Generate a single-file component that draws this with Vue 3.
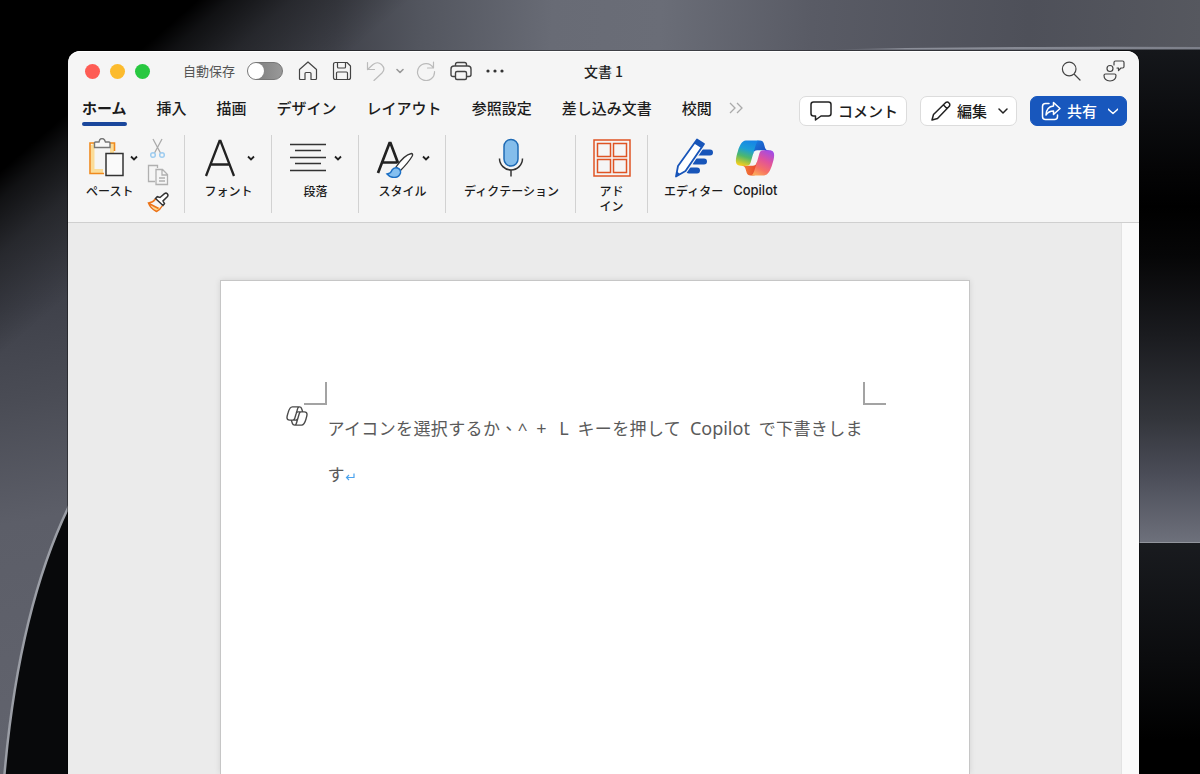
<script setup>
import { ref } from 'vue'

const autosave = ref(false)
const activeTab = ref('ホーム')
const tabs = ['ホーム', '挿入', '描画', 'デザイン', 'レイアウト', '参照設定', '差し込み文書', '校閲']
</script>

<template>
  <div class="desktop">
    <svg class="wallpaper" viewBox="0 0 1200 774" preserveAspectRatio="none" aria-hidden="true">
      <defs>
        <linearGradient id="wTop" gradientUnits="userSpaceOnUse" x1="120" y1="0" x2="1200" y2="60">
          <stop offset="0" stop-color="#303238" />
          <stop offset=".2" stop-color="#40424a" />
          <stop offset=".28" stop-color="#53565f" />
          <stop offset=".4" stop-color="#686b75" />
          <stop offset=".5" stop-color="#6a6d77" />
          <stop offset=".64" stop-color="#595b65" />
          <stop offset=".84" stop-color="#4e5059" />
          <stop offset="1" stop-color="#56585f" />
        </linearGradient>
        <linearGradient id="wLeft" gradientUnits="userSpaceOnUse" x1="0" y1="120" x2="120" y2="774">
          <stop offset="0" stop-color="#34363b" />
          <stop offset=".28" stop-color="#3f414a" />
          <stop offset=".42" stop-color="#4a4c55" />
          <stop offset=".6" stop-color="#5c5e68" />
          <stop offset="1" stop-color="#62646e" />
        </linearGradient>
        <linearGradient id="wShade" gradientUnits="userSpaceOnUse" x1="85" y1="98" x2="176" y2="203">
          <stop offset="0" stop-color="#000" />
          <stop offset=".15" stop-color="#000" stop-opacity=".7" />
          <stop offset=".45" stop-color="#000" stop-opacity=".35" />
          <stop offset="1" stop-color="#000" stop-opacity="0" />
        </linearGradient>
        <linearGradient id="wRight" x1="0" y1="0" x2="0" y2="1">
          <stop offset="0" stop-color="#15171b" />
          <stop offset=".25" stop-color="#040405" />
          <stop offset=".32" stop-color="#000" />
          <stop offset=".42" stop-color="#060607" />
          <stop offset=".58" stop-color="#1a1b1f" />
          <stop offset=".75" stop-color="#33353b" />
          <stop offset=".86" stop-color="#4a4c57" />
          <stop offset="1" stop-color="#6d707b" />
        </linearGradient>
        <linearGradient id="wFoot" x1="0" y1="0" x2="0" y2="1">
          <stop offset="0" stop-color="#191b1f" />
          <stop offset=".5" stop-color="#0b0c0e" />
          <stop offset=".85" stop-color="#000" />
        </linearGradient>
        <linearGradient id="wEdge" gradientUnits="userSpaceOnUse" x1="810" y1="0" x2="1200" y2="0">
          <stop offset="0" stop-color="#8c8f99" stop-opacity="0" />
          <stop offset=".25" stop-color="#8c8f99" />
          <stop offset="1" stop-color="#7d808a" />
        </linearGradient>
      </defs>
      <rect width="1200" height="774" fill="#000" />
      <rect y="50" width="140" height="724" fill="url(#wLeft)" />
      <rect width="1200" height="60" fill="url(#wTop)" />
      <rect width="600" height="400" fill="url(#wShade)" />
      <path d="M68 508Q18 610 4 774H140V508Z" fill="#08090b" />
      <path d="M70 504Q18 610 4 780" fill="none" stroke="#9b9ea6" stroke-width="2.5" />
      <rect x="1100" y="49" width="100" height="493" fill="url(#wRight)" />
      <rect x="1100" y="543" width="100" height="231" fill="url(#wFoot)" />
      <rect x="1100" y="542" width="100" height="1" fill="#92959d" />
      <path d="M810 50Q960 46 1200 47V49.500H810Z" fill="url(#wEdge)" />
    </svg>

    <main class="window">
      <header class="titlebar">
        <div class="quick">
          <div class="lights">
            <button class="light red" aria-label="閉じる"></button>
            <button class="light yellow" aria-label="しまう"></button>
            <button class="light green" aria-label="拡大"></button>
          </div>
          <label class="autosave">自動保存<input v-model="autosave" type="checkbox" class="toggle" /></label>
          <button class="tool" aria-label="ホーム画面">
            <svg width="20" height="20" viewBox="0 0 20 20"><path d="M1.500 8.500 10 1l8.500 7.500V17.500q0 1-1 1H13V12.500q0-1-1-1H8q-1 0-1 1V18.500H2.500q-1 0-1-1Z" /></svg>
          </button>
          <button class="tool" aria-label="保存">
            <svg width="20" height="20" viewBox="0 0 20 20"><path d="M1.500 3.500q0-2 2-2H15l3.500 3.500V16.500q0 2-2 2h-13q-2 0-2-2ZM5.500 1.500V6q0 1 1 1h6q1 0 1-1V1.500M4.500 18.500V12q0-1 1-1h9q1 0 1 1v6.500" /></svg>
          </button>
          <div class="undo">
            <button class="tool dim" aria-label="元に戻す">
              <svg width="20" height="20" viewBox="0 0 20 20"><path d="M1.500 1.500V8.500H8.500M1.500 8.500 7 3.500Q11.500 0 15.500 3.500q4.500 4.500.5 8.500L8 19.500" /></svg>
            </button>
            <button class="tool grey" aria-label="元に戻す履歴">
              <svg width="8" height="8" viewBox="0 0 8 8"><path d="m1 2.500 3 3 3-3" stroke-width="1.600" /></svg>
            </button>
          </div>
          <button class="tool dim redo" aria-label="繰り返し">
            <svg width="20" height="20" viewBox="0 0 20 20"><path d="M17.500 1v6h-6M17.200 6.500A8.500 8.500 0 1 0 18.500 10.500" /></svg>
          </button>
          <button class="tool" aria-label="印刷">
            <svg width="22" height="20" viewBox="0 0 22 20"><path d="M5 15.500H3q-2 0-2-2V8q0-3 3-3h14q3 0 3 3v5.500q0 2-2 2h-2M5.500 5V3.500q0-2 2-2h7q2 0 2 2V5M7 10.500h8q1.500 0 1.500 1.500v5q0 1.500-1.500 1.500H7Q5.500 18.500 5.500 17v-5q0-1.500 1.500-1.500Z" stroke-width="1.400" /></svg>
          </button>
          <button class="tool" aria-label="その他">
            <svg width="18" height="6" viewBox="1 0 18 6"><g class="dots"><circle cx="3" cy="3" r="1.600" /><circle cx="10" cy="3" r="1.600" /><circle cx="17" cy="3" r="1.600" /></g></svg>
          </button>
        </div>
        <h1 class="title">文書 1</h1>
        <div class="title-end">
          <button class="tool" aria-label="検索">
            <svg width="20" height="20" viewBox="0 0 20 20"><path d="M15 8A6.800 6.800 0 1 1 1.400 8 6.800 6.800 0 0 1 15 8ZM13 13 19 19" /></svg>
          </button>
          <button class="tool" aria-label="フィードバック">
            <svg width="22" height="22" viewBox="0 0 22 22"><path d="M10 8.500a3 3 0 1 1-6 0 3 3 0 0 1 6 0ZM2.500 14h9q1.500 0 1.500 1.500 0 5-6 5.500-6-.500-6-5.500Q1 14 2.500 14ZM12.500 1h7Q21 1 21 2.500v4Q21 8 19.500 8H18l-2.500 2.500V8.200L14 8M11 5V2.500Q11 1 12.500 1" /></svg>
          </button>
        </div>
      </header>

      <div class="tabrow">
        <nav class="tabs">
          <button v-for="t in tabs" :key="t" class="tab" :class="{ active: t === activeTab }" @click="activeTab = t">{{ t }}</button>
          <button class="more" aria-label="その他のタブ">
            <svg width="16" height="12" viewBox="0 0 16 12"><path d="m2 1 5 5-5 5M9 1l5 5-5 5" /></svg>
          </button>
        </nav>
        <div class="actions">
          <button class="action">
            <svg width="22" height="20" viewBox="0 0 22 20"><path d="M3.500 1h15Q21 1 21 3.500v9q0 2.500-2.500 2.500H11l-5.500 4V15h-2Q1 15 1 12.500v-9Q1 1 3.500 1Z" /></svg>
            コメント
          </button>
          <button class="action">
            <svg width="20" height="20" viewBox="0 0 20 20"><path d="m1 19 1.500-5.500L14.500 1.700q2-1.400 3.500.3 1.500 1.500.3 3.300L6.500 17.500ZM12.500 4l3.500 3.500" /></svg>
            編集
            <svg class="chev" width="10" height="8" viewBox="0 0 10 8"><path d="m1 2 4 4 4-4" /></svg>
          </button>
          <button class="action primary">
            <svg width="20" height="20" viewBox="0 0 20 20"><path d="M8 2.500H4.500Q1.500 2.500 1.500 5.500v10q0 3 3 3h9q3 0 3-3V14M12.500 1.500l6.500 6-6.500 6V10q-5 0-7.500 4 .5-8.500 7.500-9Z" /></svg>
            共有
            <svg class="chev" width="10" height="8" viewBox="0 0 10 8"><path d="m0 2 5 4.500 5-4.500" /></svg>
          </button>
        </div>
      </div>

      <section class="ribbon" aria-label="リボン">
        <div class="group clip">
          <button class="item paste">
            <span class="icons">
              <svg width="37" height="40" viewBox="0 0 37 40">
                <path d="M4.500 7v26H15M4.500 7H8" fill="none" stroke="#fbdc98" stroke-width="4" />
                <path d="M19 7h5v8" fill="none" stroke="#fbdc98" stroke-width="4" />
                <path d="M8 5H2v30.500h14M19 5h7.500v8" fill="none" stroke="#f08a1d" stroke-width="1.600" />
                <path d="M6.500 9.500V5q0-1 1-1H11q.500-3.500 3-3.500T17.500 4H21q1 0 1 1v4.500Z" fill="#f8f8f8" stroke="#777" stroke-width="1.400" />
                <rect x="18" y="15.500" width="17" height="22" fill="#fafafa" stroke="#333" stroke-width="1.500" />
              </svg>
              <svg class="drop" width="8" height="8" viewBox="0 0 8 8"><path d="m1 2.500 3 3 3-3" /></svg>
            </span>
            <span class="label">ペースト</span>
          </button>
          <div class="stack">
            <button aria-label="切り取り">
              <svg width="22" height="22" viewBox="0 0 22 22" fill="none"><path d="m6 2 7.500 14M15 2 7.500 16" stroke="#aaa" stroke-width="1.300" /><circle cx="6" cy="18" r="2.300" stroke="#9fcdf0" stroke-width="1.500" /><circle cx="15" cy="18" r="2.300" stroke="#9fcdf0" stroke-width="1.500" /></svg>
            </button>
            <button aria-label="コピー">
              <svg width="22" height="22" viewBox="0 0 22 22" fill="none" stroke="#b0b0b0" stroke-width="1.300"><path d="M8 17.500H1.500V1.500h9V4M9 5.500h6.500l5 5v10H9ZM15 5.500V11h5.500M12 14h6M12 17h6" /></svg>
            </button>
            <button aria-label="書式のコピー">
              <svg width="22" height="22" viewBox="0 0 22 22" fill="none" stroke-width="1.500"><path d="m4 14 10 3-4.500 4Z" fill="#fbd98b" /><path d="M8.500 8Q6 11.500 1.500 12q2 5.500 8 8.500 3.500-1.500 6-6M2 12.500l9.500 5" stroke="#ec7419" /><path d="m8.500 7.500 7.500 7 1.500-1.800-1.500-2.700 4.500-4.500q1-1.500-.2-2.700t-2.800-.2L13 6.500 10.300 5.700Z" fill="#fff" stroke="#333" /></svg>
            </button>
          </div>
        </div>
        <div class="group">
          <button class="item">
            <span class="icons">
              <svg width="36" height="40" viewBox="0 0 36 40"><path d="M3 38 16.500 3h1L31 38M7.500 26.500h19" fill="none" stroke="#222" stroke-width="2.300" /></svg>
              <svg class="drop" width="8" height="8" viewBox="0 0 8 8"><path d="m1 2.500 3 3 3-3" /></svg>
            </span>
            <span class="label">フォント</span>
          </button>
        </div>
        <div class="group">
          <button class="item">
            <span class="icons">
              <svg width="36" height="40" viewBox="0 0 36 40"><path d="M0 6.500h36M5 12.500h26M0 19.500h36M5 25.500h26M0 32.500h36" fill="none" stroke="#333" stroke-width="1.500" /></svg>
              <svg class="drop" width="8" height="8" viewBox="0 0 8 8"><path d="m1 2.500 3 3 3-3" /></svg>
            </span>
            <span class="label">段落</span>
          </button>
        </div>
        <div class="group">
          <button class="item">
            <span class="icons">
              <svg width="38" height="40" viewBox="0 0 38 40">
                <path d="M2 35 13.500 5h1L22 25M6.500 24.500h15" fill="none" stroke="#222" stroke-width="2.700" />
                <path d="M20 29Q28 17 35.500 15.500q2 .5.500 3Q32 25 24 33Z" fill="#fff" stroke="#333" stroke-width="1.300" />
                <path d="M11 36q4-.500 5-4 2-3 5.500-2t3 5Q23 39.500 18 39.500q-4 0-7-3.500Z" fill="#84bff0" stroke="#1c6fc4" stroke-width="1.400" />
              </svg>
              <svg class="drop" width="8" height="8" viewBox="0 0 8 8"><path d="m1 2.500 3 3 3-3" /></svg>
            </span>
            <span class="label">スタイル</span>
          </button>
        </div>
        <div class="group dictation">
          <button class="item">
            <span class="icons">
              <svg width="26" height="40" viewBox="0 0 26 40"><rect x="6" y="1.500" width="14" height="26.500" rx="7" fill="#84bdeb" stroke="#1f6bb5" stroke-width="1.500" /><path d="M1.500 20.500a11.500 11.500 0 0 0 23 0M13 32v6.500" fill="none" stroke="#333" stroke-width="1.500" /></svg>
            </span>
            <span class="label">ディクテーション</span>
          </button>
        </div>
        <div class="group addin">
          <button class="item">
            <span class="icons">
              <svg width="38" height="40" viewBox="0 0 38 40" fill="none" stroke="#df5424" stroke-width="1.500"><rect x="1" y="2" width="36" height="36" /><rect x="4.500" y="5.500" width="13" height="13" /><rect x="20.500" y="5.500" width="13" height="13" /><rect x="4.500" y="21.500" width="13" height="13" /><rect x="20.500" y="21.500" width="13" height="13" /></svg>
            </span>
            <span class="label">アド<br />イン</span>
          </button>
        </div>
        <div class="group last">
          <button class="item">
            <span class="icons">
              <svg width="40" height="40" viewBox="0 0 40 40"><path d="M24 14.500h12M20 23.500h10M15 32.500h8" fill="none" stroke="#1855b9" stroke-width="6" stroke-linecap="round" /><path d="m2 38.500 2-10.500L23 1.500l7 4.500L11.500 33Z" fill="#f5f5f5" stroke="#f5f5f5" stroke-width="4" /><path d="m2 38.500 2-10.500L23 1.500l7 4.500L11.500 33Z" fill="#fff" stroke="#1855b9" stroke-width="1.800" stroke-linejoin="round" /><path d="m2 38.500 1-5 3 2.500ZM23 1.500l7 4.500-2.800 4-7-4.500Z" fill="#1855b9" /></svg>
            </span>
            <span class="label">エディター</span>
          </button>
          <button class="item">
            <span class="icons">
              <svg width="40" height="38" viewBox="1 3 46 42">
                <defs>
                  <linearGradient id="cpA" x1="0" y1="0" x2="1" y2="1"><stop offset="0" stop-color="#1a7fe0" /><stop offset="1" stop-color="#1b3fb5" /></linearGradient>
                  <linearGradient id="cpB" x1="0" y1="0" x2="1" y2="0"><stop offset="0" stop-color="#f58a3c" /><stop offset="1" stop-color="#e8452d" /></linearGradient>
                  <linearGradient id="cpC" x1=".6" y1="0" x2=".3" y2="1"><stop offset="0" stop-color="#1785e6" /><stop offset=".35" stop-color="#1b9fd6" /><stop offset=".65" stop-color="#4fb86a" /><stop offset="1" stop-color="#f2cf1d" /></linearGradient>
                  <linearGradient id="cpD" x1=".8" y1="0" x2=".3" y2="1"><stop offset="0" stop-color="#a04be8" /><stop offset=".4" stop-color="#e0529c" /><stop offset=".75" stop-color="#f77263" /><stop offset="1" stop-color="#fba65a" /></linearGradient>
                </defs>
                <path fill="url(#cpA)" d="M34.142 7.325A4.630 4.630 0 0 0 29.700 4H28.350a4.630 4.630 0 0 0-4.554 3.794L21.480 20.407l.575-1.965a4.630 4.630 0 0 1 4.444-3.330h7.853l3.294 1.282 3.175-1.283h-.926a4.630 4.630 0 0 1-4.443-3.325l-1.310-4.461Z" />
                <path fill="url(#cpB)" d="M14.330 40.656A4.630 4.630 0 0 0 18.779 44h2.870a4.630 4.630 0 0 0 4.629-4.510l.312-12.163-.654 2.233a4.630 4.630 0 0 1-4.443 3.329h-7.919l-2.823-1.532-3.057 1.532h.912a4.630 4.630 0 0 1 4.447 3.344l1.279 4.423Z" />
                <path fill="url(#cpC)" d="M29.500 4H13.460c-4.583 0-7.332 6.057-9.165 12.113C2.123 23.290-.720 32.885 7.503 32.885h6.925a4.630 4.630 0 0 0 4.456-3.358q2.400-8.600 4.971-17.156c.843-2.843 1.544-5.284 2.621-6.805C27.080 4.715 28.086 4 29.500 4Z" />
                <path fill="url(#cpD)" d="M18.498 44h16.040c4.582 0 7.332-6.058 9.165-12.115 2.172-7.177 5.015-16.775-3.208-16.775h-6.926a4.630 4.630 0 0 0-4.455 3.358q-2.400 8.600-4.972 17.160c-.842 2.842-1.544 5.285-2.620 6.806-.604.852-1.610 1.566-3.024 1.566Z" />
              </svg>
            </span>
            <span class="label latin">Copilot</span>
          </button>
        </div>
      </section>

      <div class="workspace">
        <div class="canvas">
          <article class="page">
            <div class="corners"><span class="corner left"></span><span class="corner right"></span></div>
            <div class="body">
              <button class="draft" aria-label="Copilot で下書き">
                <svg width="22" height="22" viewBox="0 0 48 48" fill="none" stroke="#4a4a4a" stroke-width="3" stroke-linejoin="round"><path d="M29 4H14C9 4 6.500 10 4.500 17 2 25-.500 33 8 33h6.500q3.500 0 4.500-3.500l5-17Q26 4 29 4ZM19 44h15c5 0 7.500-6 9.500-13 2.500-8 5-16-3.500-16h-6.500q-3.500 0-4.500 3.500l-5 17Q22 44 19 44ZM29 4q4 0 5 3.500L36.500 15M19 44q-4 0-5-3.500L11.500 33M34 15h-7q-4 0-5 4M14 33h7q4 0 5-4" /></svg>
              </button>
              <p class="text">アイコンを選択するか<span lang="zh-TW" class="comma">、</span>^ <span class="word">+</span> <span class="word">L</span> キーを押して <span class="word">Copilot</span> で下書きします<svg class="ret" width="10" height="8" viewBox="0 0 10 8"><path d="M9 .500V4.500H1.500M4 2 1.500 4.500 4 7" /></svg></p>
            </div>
          </article>
        </div>
        <div class="scroller"></div>
      </div>
    </main>
  </div>
</template>

<style>
html, body { margin: 0; background: #000; }
</style>

<style scoped>
.desktop {
  position: relative;
  box-sizing: border-box;
  height: 100vh;
  padding: 51px 61px 0 68px;
  overflow: hidden;
  display: flex;
  font-family: "Noto Sans CJK JP", "Noto Sans", sans-serif;
  color: #1c1c1c;
}
.wallpaper { position: absolute; inset: 0; width: 100%; height: 100%; }
button { margin: 0; padding: 0; border: 0; background: none; font: inherit; color: inherit; cursor: pointer; }
svg { display: block; flex: none; }
.window {
  position: relative;
  flex: 1;
  min-width: 0;
  display: flex;
  flex-direction: column;
  background: #f5f5f5;
  border-radius: 12px 12px 0 0;
  overflow: hidden;
  box-shadow: 0 0 0 1px rgba(0, 0, 0, .4), inset 0 1px 0 #fff;
}
.titlebar { display: grid; grid-template-columns: 1fr auto 1fr; align-items: center; height: 40px; }
.quick { display: flex; align-items: center; gap: 14px; padding-left: 17px; }
.lights { display: flex; gap: 10px; margin-right: 19px; }
.light { width: 15px; height: 15px; border-radius: 50%; }
.red { background: #fe5c54; }
.yellow { background: #fcbb2d; }
.green { background: #28c840; }
.autosave { display: flex; align-items: center; gap: 12px; margin-right: 1px; font-size: 13px; line-height: 20px; color: #555; white-space: nowrap; }
.toggle { appearance: none; display: flex; box-sizing: border-box; width: 36px; height: 18px; margin: 0; border: 1px solid #777; border-radius: 9px; background: linear-gradient(90deg, #777, #999); cursor: pointer; }
.toggle::before { content: ""; width: 16px; height: 16px; border-radius: 50%; background: #fff; }
.toggle:checked { justify-content: flex-end; background: #1855b9; }
.tool { fill: none; stroke: #444; stroke-width: 1.200; stroke-linejoin: round; stroke-linecap: round; }
.dim { stroke: #bbb; }
.grey { stroke: #999; }
.dots { fill: #333; stroke: none; }
.undo { display: flex; align-items: center; gap: 10px; }
.redo { margin-left: -2px; }
.title { margin: 0; font-size: 14px; line-height: 20px; font-weight: 500; color: #222; }
.title-end { display: flex; justify-content: flex-end; align-items: center; gap: 22px; padding-right: 14px; }

.tabrow { display: flex; justify-content: space-between; align-items: flex-start; height: 40px; }
.tabs { display: flex; gap: 30px; padding: 6px 0 0 14px; }
.tab { font-size: 15px; line-height: 22px; font-weight: 500; white-space: nowrap; padding-bottom: 6px; }
.active { font-weight: 700; }
.active::after { content: ""; display: block; height: 4px; margin: 3px 0 -7px; border-radius: 2px; background: #1a479c; }
.more { height: 22px; margin-left: -14px; fill: none; stroke: #aaa; stroke-width: 1.300; }
.actions { display: flex; gap: 13px; padding: 5px 12px 0 0; }
.action {
  display: flex;
  align-items: center;
  gap: 6px;
  height: 30px;
  box-sizing: border-box;
  padding: 0 8px 0 10px;
  border: 1px solid #dcdcdc;
  border-radius: 7px;
  background: #fff;
  font-size: 15px;
  line-height: 20px;
  font-weight: 500;
  white-space: nowrap;
  fill: none;
  stroke: none;
}
.action svg { stroke: #222; stroke-width: 1.500; stroke-linejoin: round; stroke-linecap: round; }
.action .chev { margin-left: 5px; }
.primary { background: #1857bd; border-color: #1857bd; color: #fff; }
.primary svg { stroke: #fff; }

.ribbon { display: flex; padding: 4px 0 9px; border-bottom: 1px solid #cfcfcf; }
.group { box-sizing: border-box; width: 87px; height: 78px; padding: 2px 0 0 1px; display: flex; justify-content: center; align-items: flex-start; border-right: 1px solid #d2d2d2; }
.clip { width: 117px; justify-content: flex-start; padding-left: 18px; gap: 9px; }
.dictation { width: 130px; padding-left: 2px; }
.addin { width: 72px; padding-left: 0; }
.last { width: auto; border: 0; padding-left: 16px; gap: 10px; }
.item { display: flex; flex-direction: column; align-items: center; gap: 4px; }
.icons { display: flex; align-items: center; justify-content: center; gap: 8px; height: 42px; }
.drop { fill: none; stroke: #222; stroke-width: 1.800; }
.label { font-size: 12px; line-height: 15px; font-weight: 500; white-space: nowrap; }
.latin { font-family: Inter, sans-serif; font-size: 13px; }
.paste { align-items: flex-start; }
.paste .icons { gap: 5px; padding-left: 2px; }
.stack { display: flex; flex-direction: column; gap: 5px; }

.workspace { flex: 1; min-height: 0; display: flex; background: #ebebeb; }
.canvas { flex: 1; min-width: 0; display: flex; justify-content: center; padding-top: 57px; }
.page { box-sizing: border-box; flex: 0 1 750px; background: #fff; border: 1px solid #c6c6c6; border-bottom: 0; box-shadow: 0 0 6px rgba(0, 0, 0, .1); }
.scroller { width: 18px; box-sizing: border-box; background: #fafafa; border-left: 1px solid #e3e3e3; }
.corners { display: flex; justify-content: space-between; padding: 101px 83px 0; }
.corner { width: 21px; height: 21px; border-bottom: 2px solid #a3a3a3; }
.left { border-right: 2px solid #a3a3a3; }
.right { border-left: 2px solid #a3a3a3; }
.body { display: flex; align-items: flex-start; gap: 20px; padding: 0 106px 0 65px; }
.text { flex: 1; margin: 0; font-family: "Noto Sans", "Noto Sans CJK JP", sans-serif; font-size: 17px; line-height: 46px; color: #5a5a5a; text-align: justify; }
.comma { font-family: "Noto Sans CJK TC", sans-serif; }
.word { padding: 0 4px; font-size: 18px; line-height: 20px; }
.ret { display: inline-block; fill: none; stroke: #4ba3ee; stroke-width: 1.200; }
</style>
